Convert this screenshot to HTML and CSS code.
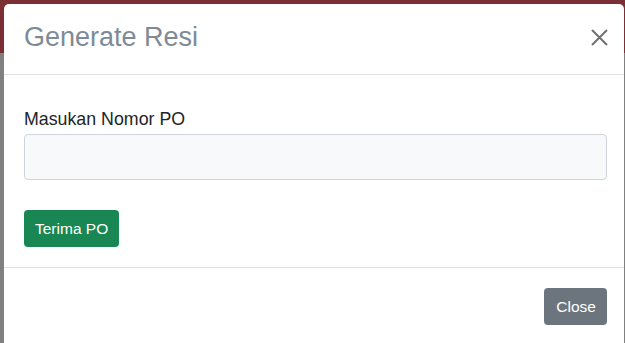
FILE: index.html
```html
<!DOCTYPE html>
<html lang="id">
<head>
<meta charset="utf-8">
<title>Generate Resi</title>
<link rel="stylesheet" href="styles.css">
</head>
<body>
<div class="backdrop">
  <div class="modal">
    <div class="modal-header">
      <h4 class="modal-title">Generate Resi</h4>
      <button class="btn-close" type="button" aria-label="Close">
        <svg width="17" height="17" viewBox="0 0 17 17"><path d="M1 1L16 16M16 1L1 16" stroke="#707070" stroke-width="2" fill="none"/></svg>
      </button>
    </div>
    <div class="modal-body">
      <label class="form-label" for="po">Masukan Nomor PO</label>
      <input class="form-control" id="po" type="text">
      <button class="btn btn-success" type="button">Terima PO</button>
    </div>
    <div class="modal-footer">
      <button class="btn btn-secondary" type="button">Close</button>
    </div>
  </div>
</div>
</body>
</html>
```

FILE: styles.css
```css
html, body {
  margin: 0;
  padding: 0;
}
body {
  width: 625px;
  height: 343px;
  overflow: hidden;
  font-family: "Liberation Sans", Arial, sans-serif;
  color: #212529;
  background: linear-gradient(to bottom, #7b2e34 0, #7b2e34 53px, #808080 53px);
}
.backdrop {
  padding: 4px 0 0 4px;
}
.modal {
  width: 620px;
  height: 339px;
  overflow: hidden;
  background: #fff;
  border-radius: 5px 5px 0 0;
  box-sizing: border-box;
}
.modal-header {
  display: flex;
  align-items: center;
  justify-content: space-between;
  padding: 17px 16px 21px 20px;
  border-bottom: 1px solid #dee2e6;
}
.modal-title {
  margin: 0;
  font-size: 27px;
  line-height: 32px;
  font-weight: 400;
  color: #7d8b97;
}
.btn-close {
  border: 0;
  background: none;
  padding: 0;
  margin: 0;
  width: 17px;
  height: 17px;
  display: flex;
}
.modal-body {
  padding: 31px 17px 20px 20px;
  display: flex;
  flex-direction: column;
  align-items: flex-start;
}
.form-label {
  font-size: 17.8px;
  line-height: 26px;
  margin-bottom: 2px;
}
.form-control {
  box-sizing: border-box;
  width: 100%;
  height: 46px;
  margin: 0;
  border: 1px solid #ced4da;
  border-radius: 4px;
  background: #f8f9fa;
}
.btn {
  border: 0;
  border-radius: 4px;
  color: #fff;
  font-family: "Liberation Sans", Arial, sans-serif;
  font-size: 15.5px;
  height: 37px;
  padding: 0 11px;
  margin: 0;
}
.btn-success {
  background: #198754;
  margin-top: 30px;
}
.btn-secondary {
  background: #6c757d;
  padding: 0 11px 0 12px;
}
.modal-footer {
  border-top: 1px solid #dee2e6;
  padding: 20px 17px 14px 20px;
  display: flex;
  justify-content: flex-end;
}
```
